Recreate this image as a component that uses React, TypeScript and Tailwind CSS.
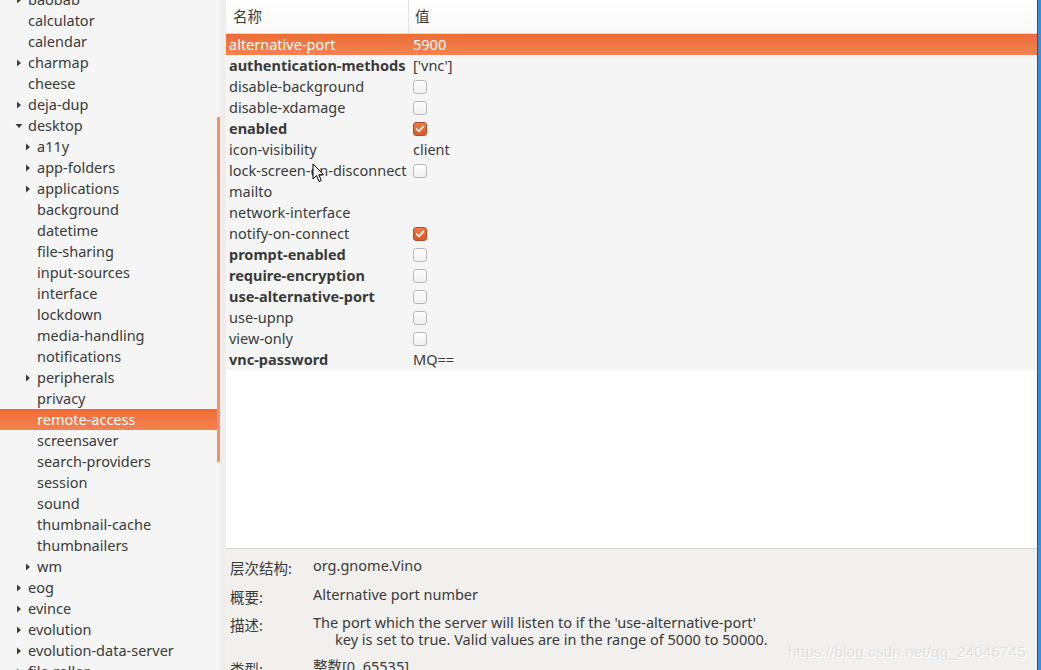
import React from "react";

const FONT = { fontFamily: '"Noto Sans", "Noto Sans CJK SC", sans-serif' };

type TreeItem = { name: string; level: 1 | 2; arrow?: "right" | "down"; selected?: boolean };

const tree: TreeItem[] = [
  { name: "baobab", level: 1, arrow: "right" },
  { name: "calculator", level: 1 },
  { name: "calendar", level: 1 },
  { name: "charmap", level: 1, arrow: "right" },
  { name: "cheese", level: 1 },
  { name: "deja-dup", level: 1, arrow: "right" },
  { name: "desktop", level: 1, arrow: "down" },
  { name: "a11y", level: 2, arrow: "right" },
  { name: "app-folders", level: 2, arrow: "right" },
  { name: "applications", level: 2, arrow: "right" },
  { name: "background", level: 2 },
  { name: "datetime", level: 2 },
  { name: "file-sharing", level: 2 },
  { name: "input-sources", level: 2 },
  { name: "interface", level: 2 },
  { name: "lockdown", level: 2 },
  { name: "media-handling", level: 2 },
  { name: "notifications", level: 2 },
  { name: "peripherals", level: 2, arrow: "right" },
  { name: "privacy", level: 2 },
  { name: "remote-access", level: 2, selected: true },
  { name: "screensaver", level: 2 },
  { name: "search-providers", level: 2 },
  { name: "session", level: 2 },
  { name: "sound", level: 2 },
  { name: "thumbnail-cache", level: 2 },
  { name: "thumbnailers", level: 2 },
  { name: "wm", level: 2, arrow: "right" },
  { name: "eog", level: 1, arrow: "right" },
  { name: "evince", level: 1, arrow: "right" },
  { name: "evolution", level: 1, arrow: "right" },
  { name: "evolution-data-server", level: 1, arrow: "right" },
  { name: "file-roller", level: 1, arrow: "right" },
];

type Val = { text?: string; check?: boolean };
type Row = { name: string; bold?: boolean; value: Val; selected?: boolean };

const rows: Row[] = [
  { name: "alternative-port", value: { text: "5900" }, selected: true },
  { name: "authentication-methods", bold: true, value: { text: "['vnc']" } },
  { name: "disable-background", value: { check: false } },
  { name: "disable-xdamage", value: { check: false } },
  { name: "enabled", bold: true, value: { check: true } },
  { name: "icon-visibility", value: { text: "client" } },
  { name: "lock-screen-on-disconnect", value: { check: false } },
  { name: "mailto", value: {} },
  { name: "network-interface", value: {} },
  { name: "notify-on-connect", value: { check: true } },
  { name: "prompt-enabled", bold: true, value: { check: false } },
  { name: "require-encryption", bold: true, value: { check: false } },
  { name: "use-alternative-port", bold: true, value: { check: false } },
  { name: "use-upnp", value: { check: false } },
  { name: "view-only", value: { check: false } },
  { name: "vnc-password", bold: true, value: { text: "MQ==" } },
];

function Arrow({ dir, light }: { dir: "right" | "down"; light?: boolean }) {
  const c = light ? "#ffffff" : "#3c3c3c";
  if (dir === "down")
    return (
      <svg width="8" height="8" viewBox="0 0 8 8">
        <path d="M0.5 2 L7.5 2 L4 6 Z" fill={c} />
      </svg>
    );
  return (
    <svg width="8" height="8" viewBox="0 0 8 8">
      <path d="M2 0.5 L6 4 L2 7.5 Z" fill={c} />
    </svg>
  );
}

function Checkbox({ checked }: { checked: boolean }) {
  if (checked)
    return (
      <div className="w-[14px] h-[14px] rounded-[3px] border border-[#b94a1c] bg-gradient-to-b from-[#ef7a4a] to-[#d9582a] flex items-center justify-center">
        <svg width="10" height="10" viewBox="0 0 10 10">
          <path d="M1.8 5.2 L4 7.3 L8.3 2.6" stroke="#fff" strokeWidth="1.7" fill="none" strokeLinecap="round" strokeLinejoin="round" />
        </svg>
      </div>
    );
  return <div className="w-[14px] h-[14px] rounded-[3px] border border-[#b8b8b8] bg-gradient-to-b from-[#fdfdfd] to-[#f0f0f0]" />;
}

export default function App() {
  return (
    <div className="relative w-[1041px] h-[670px] overflow-hidden flex bg-[#f5f5f5] text-[14.5px] text-[#3a3a3a]" style={FONT}>
      {/* Left tree */}
      <div className="relative w-[220px] shrink-0 bg-[#f5f5f5]">
        <div className="flex flex-col mt-[-11px]">
          {tree.map((t) => (
            <div
              key={t.name}
              className={
                "h-[21px] flex items-center shrink-0 " +
                (t.selected ? "bg-gradient-to-b from-[#ec6c39] to-[#f5824f] text-white" : "")
              }
            >
              <div className={t.level === 1 ? "w-[28px] flex justify-end pr-[5px]" : "w-[37px] flex justify-end pr-[5px]"}>
                {t.arrow ? <Arrow dir={t.arrow} light={t.selected} /> : null}
              </div>
              <span className="leading-[21px] whitespace-nowrap">{t.name}</span>
            </div>
          ))}
        </div>
        <div className="absolute right-0 top-[117px] w-[3px] h-[345px] bg-[#f0936a]" />
      </div>
      <div className="w-[6px] shrink-0 bg-[#efeeed]" />

      {/* Right */}
      <div className="flex-1 flex flex-col bg-white min-h-0">
        <div className="h-[548px] shrink-0 flex flex-col bg-white">
          <div className="h-[34px] flex border-b border-[#d9d9d9] bg-gradient-to-b from-white to-[#f9f9f9] shrink-0">
            <div className="w-[183px] border-r border-[#e2e2e2] pl-[7px] flex items-center">名称</div>
            <div className="flex-1 pl-[6px] flex items-center">值</div>
          </div>
          <div className="flex flex-col bg-[#f5f5f5]">
            {rows.map((r) => (
              <div
                key={r.name}
                className={
                  "h-[21px] flex items-center " +
                  (r.selected ? "bg-gradient-to-b from-[#ea6d3a] to-[#f5834f] text-white" : "")
                }
              >
                <div className={"w-[187px] pl-[3px] whitespace-nowrap overflow-visible " + (r.bold ? "font-bold" : "")}>{r.name}</div>
                <div className="flex-1 flex items-center">
                  {r.value.text !== undefined ? <span>{r.value.text}</span> : null}
                  {r.value.check !== undefined ? <Checkbox checked={r.value.check} /> : null}
                </div>
              </div>
            ))}
          </div>
        </div>
        <div className="flex-1 min-h-0 border-t border-[#d6d6d6] bg-[#f1f0ef] pl-[4px] pt-[8px] flex flex-col gap-[9px] leading-[17px]">
          <div className="flex shrink-0">
            <div className="w-[83px] shrink-0 pt-[3px]">层次结构:</div>
            <div>org.gnome.Vino</div>
          </div>
          <div className="flex shrink-0">
            <div className="w-[83px] shrink-0 pt-[3px]">概要:</div>
            <div>Alternative port number</div>
          </div>
          <div className="flex shrink-0 -mt-[1px]">
            <div className="w-[83px] shrink-0 pt-[3px]">描述:</div>
            <div>
              <div>The port which the server will listen to if the 'use-alternative-port'</div>
              <div className="pl-[22px]">key is set to true. Valid values are in the range of 5000 to 50000.</div>
            </div>
          </div>
          <div className="flex shrink-0 mt-[1px]">
            <div className="w-[83px] shrink-0 pt-[3px]">类型:</div>
            <div>整数[0, 65535]</div>
          </div>
        </div>
      </div>
      <div className="w-[1px] shrink-0 bg-[#7b3b2c]" />
      <div className="w-[3px] shrink-0 bg-[#3b8fd9]" />

      {/* watermark */}
      <div
        className="absolute left-[788px] top-[640px] text-[15.5px] text-[#e0e0e0] whitespace-nowrap"
        style={{ fontFamily: '"Liberation Sans", Arial, sans-serif', textShadow: "1px 1px 0 #ffffff" }}
      >
        https://blog.csdn.net/qq_24046745
      </div>

      {/* mouse cursor */}
      <svg className="absolute left-[312px] top-[163px]" width="13" height="20" viewBox="0 0 13 20">
        <path d="M1 1 L1 16 L4.5 12.5 L7 18.5 L9.3 17.5 L6.8 11.7 L11.5 11.7 Z" fill="#ffffff" stroke="#000000" strokeWidth="1" strokeLinejoin="round" />
      </svg>
    </div>
  );
}
